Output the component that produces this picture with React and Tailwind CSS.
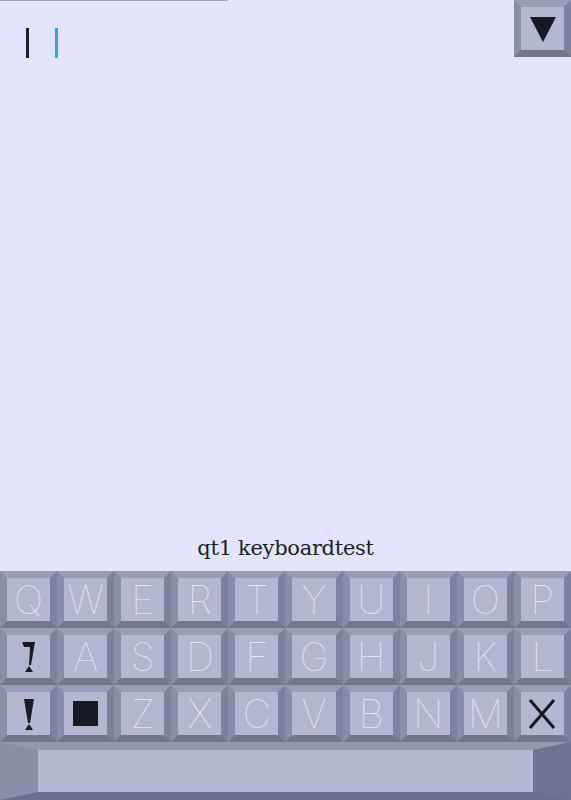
import React from "react";

const rows = [
  ["Q", "W", "E", "R", "T", "Y", "U", "I", "O", "P"],
  ["shift", "A", "S", "D", "F", "G", "H", "J", "K", "L"],
  ["caps", "square", "Z", "X", "C", "V", "B", "N", "M", "close"],
];

function Glyph({ k }) {
  if (k === "shift") {
    return (
      <svg width="20" height="33" viewBox="0 0 20 33">
        <polygon points="3,2 16,2 12,25 10,25 11,7 5,7" fill="#161c22" />
        <polygon points="6,32 14,32 10,26" fill="#161c22" />
      </svg>
    );
  }
  if (k === "caps") {
    return (
      <svg width="20" height="34" viewBox="0 0 20 34">
        <polygon points="5,2 15,2 11,26 9,26" fill="#161c22" />
        <polygon points="6,33 14,33 10,27" fill="#161c22" />
      </svg>
    );
  }
  if (k === "square") {
    return <div className="w-[25px] h-[25px] bg-[#151b20]" />;
  }
  if (k === "close") {
    return (
      <svg width="28" height="32" viewBox="0 0 28 32">
        <path d="M2 2 L26 30 M26 2 L2 30" stroke="#141a20" strokeWidth="3" />
      </svg>
    );
  }
  return (
    <span
      className="text-[39px] leading-none font-thin text-[#e2e4f8]"
      style={{ fontFamily: "Inter, 'DejaVu Sans', sans-serif" }}
    >
      {k}
    </span>
  );
}

function Key({ k }) {
  return (
    <div className="h-[57px] border-[7px] border-t-[#999cb6] border-l-[#898da8] border-r-[#7e819e] border-b-[#73768f] bg-[#b4b7d1] flex items-center justify-center">
      <Glyph k={k} />
    </div>
  );
}

export default function App() {
  return (
    <div className="w-[571px] h-[800px] bg-[#e3e4fd] flex flex-col overflow-hidden">
      <div className="relative flex-1">
        <div className="flex">
          <div className="w-[57px] h-px bg-[#a3a5bd]" />
          <div className="w-[57px] h-px bg-[#a3a5bd]" />
          <div className="w-[57px] h-px bg-[#a3a5bd]" />
          <div className="w-[57px] h-px bg-[#a3a5bd]" />
        </div>
        <div className="flex gap-[26px] pl-[26px] pt-[27px]">
          <div className="w-[3px] h-[30px] bg-[#1b2329]" />
          <div className="w-[3px] h-[30px] bg-[#39a2e2]" />
        </div>
        <div className="absolute top-0 right-0 w-[57px] h-[57px] border-[7px] border-t-[#999cb6] border-l-[#898da8] border-r-[#7e819e] border-b-[#73768f] bg-[#b4b7d1] flex items-center justify-center">
          <svg width="28" height="28" viewBox="0 0 28 28">
            <polygon points="1,2 27,2 14,27" fill="#151b20" />
          </svg>
        </div>
      </div>
      <div
        className="text-center text-[21px] leading-none text-[#1c1f26] pb-[12px] tracking-[-0.3px]"
        style={{ fontFamily: "'DejaVu Serif', serif" }}
      >
        qt1 keyboardtest
      </div>
      <div className="h-[229px] bg-[#7e819e] flex flex-col">
        {rows.map((row, i) => (
          <div key={i} className="grid grid-cols-10">
            {row.map((k) => (
              <Key key={k} k={k} />
            ))}
          </div>
        ))}
        <div className="h-[58px] border-t-[8px] border-b-[8px] border-l-[38px] border-r-[38px] border-t-[#9497b2] border-l-[#8a8ea9] border-r-[#6f7290] border-b-[#6c6f8c] bg-[#b4b7d1]" />
      </div>
    </div>
  );
}
